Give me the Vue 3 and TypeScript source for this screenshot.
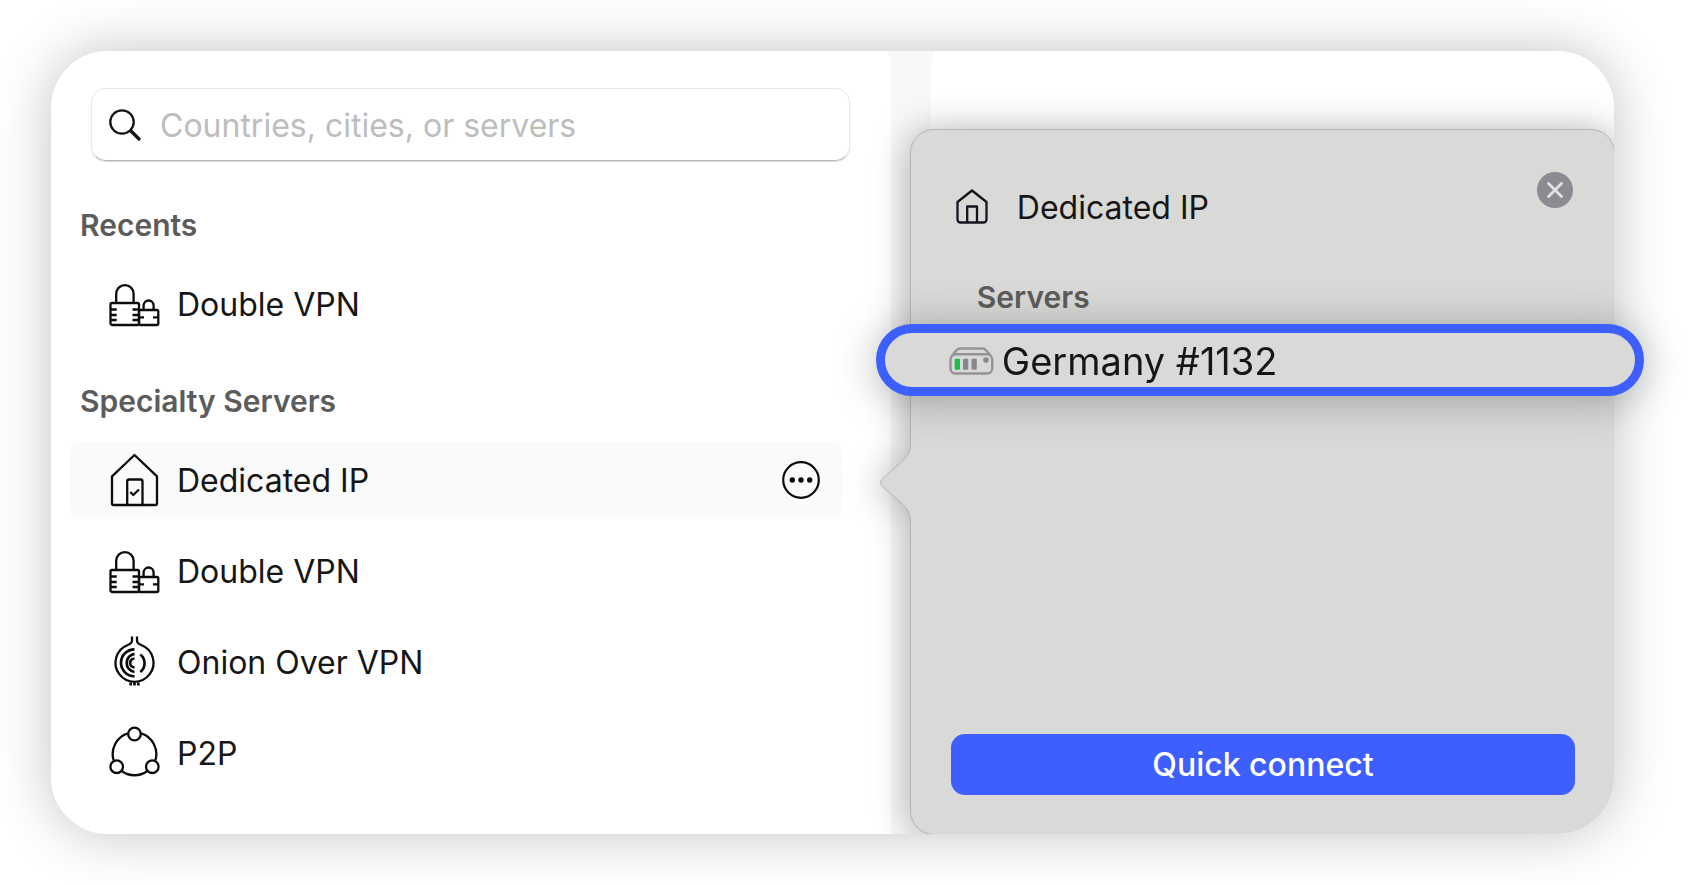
<script setup lang="ts">
import { ref } from 'vue'

type IconName = 'locks' | 'house' | 'onion' | 'p2p'

interface ServerItem {
  id: string
  label: string
  icon: IconName
}

interface ServerGroup {
  title: string
  items: ServerItem[]
}

const groups: ServerGroup[] = [
  {
    title: 'Recents',
    items: [{ id: 'recent-double', label: 'Double VPN', icon: 'locks' }],
  },
  {
    title: 'Specialty Servers',
    items: [
      { id: 'dedicated', label: 'Dedicated IP', icon: 'house' },
      { id: 'double', label: 'Double VPN', icon: 'locks' },
      { id: 'onion', label: 'Onion Over VPN', icon: 'onion' },
      { id: 'p2p', label: 'P2P', icon: 'p2p' },
    ],
  },
]

const query = ref('')
const selected = ref('dedicated')
</script>

<template>
  <main class="stage">
    <div class="window">
      <section class="sidebar">
        <label class="search">
          <svg class="search-icon" viewBox="0 0 32 32" aria-hidden="true">
            <circle cx="13" cy="13" r="11.7" />
            <path class="handle" d="M22 22L30 30" />
          </svg>
          <input v-model="query" type="text" placeholder="Countries, cities, or servers" aria-label="Search servers" />
        </label>

        <div v-for="group in groups" :key="group.title" class="group">
          <h2>{{ group.title }}</h2>
          <ul>
            <li v-for="item in group.items" :key="item.id" class="row" :class="{ active: item.id === selected }">
              <button type="button" class="pick" @click="selected = item.id">
                <svg v-if="item.icon === 'locks'" class="icon" viewBox="0 0 51 51" aria-hidden="true">
                  <rect x="2.5" y="25" width="28.5" height="22" rx="1.5" />
                  <path d="M8.2 25V15.8a8.7 8.7 0 0 1 17.4 0V25" />
                  <rect x="31" y="32" width="19.3" height="15" rx="1.5" />
                  <path d="M35.6 32V27.5a5 5 0 0 1 10 0V32" />
                  <path d="M3 31.5H8.7M3 37H8.7M3 42H8.700M24.500 31.500H31M24.500 37H31M24.500 42H31M31 39.300H36M45 39.300H50" />
                </svg>
                <svg v-else-if="item.icon === 'house'" class="icon" viewBox="0 0 51 51" aria-hidden="true">
                  <path d="M26.5 1L49 22.3V49.5a1.5 1.5 0 0 1-1.5 1.5H5.5a1.5 1.5 0 0 1-1.5-1.500V22.300Z" />
                  <path d="M19.2 51V27.5a2 2 0 0 1 2-2H32.5a2 2 0 0 1 2 2V51" />
                  <path d="M22.3 38L25.3 41L31 35.5" />
                </svg>
                <svg v-else-if="item.icon === 'onion'" class="icon" viewBox="0 0 51 51" aria-hidden="true">
                  <path d="M24 .5V4.5C24 7.3 22.5 8 19.8 9A19 19 0 1 0 33.2 9C30.5 8 29 7.3 29 4.5V.5" />
                  <path class="bold" d="M26.500 13.300a13.500 13.500 0 0 0 0 27M26.500 17.800a9.200 9.200 0 0 0 0 18.200M26.500 22.500a4.400 4.400 0 0 0 0 8.800M32.300 18.500C38 23 38 31.500 32.300 36" />
                  <path class="bold" d="M22.700 46.500V49.500M26.500 46.500V49.500M30.300 46.500V49.500" />
                </svg>
                <svg v-else class="icon" viewBox="0 0 51 51" aria-hidden="true">
                  <circle cx="26.5" cy="7" r="6.3" />
                  <circle cx="8.7" cy="39.7" r="6.3" />
                  <circle cx="44.3" cy="39.7" r="6.3" />
                  <path d="M19.8 6.4A21.700 21.700 0 0 0 5.600 33.300M33.200 6.400A21.700 21.700 0 0 1 47.400 33.300M13.900 44.200A21.700 21.700 0 0 0 39.100 44.200" />
                </svg>
                <span>{{ item.label }}</span>
              </button>
              <button v-if="item.id === selected" type="button" class="more" aria-label="More options">
                <svg viewBox="0 0 38 38" aria-hidden="true">
                  <circle class="ring" cx="19" cy="19" r="17.8" />
                  <circle cx="10.3" cy="19" r="2.7" />
                  <circle cx="19" cy="19" r="2.7" />
                  <circle cx="27.7" cy="19" r="2.7" />
                </svg>
              </button>
            </li>
          </ul>
        </div>
      </section>

      <div class="detail"></div>

      <section class="popover" aria-label="Dedicated IP">
        <svg class="arrow" viewBox="0 0 33 78" aria-hidden="true">
          <path class="fill" d="M32 0C32 9 28 13 23 17.5L3.5 34.5Q-.5 38.5 3.5 42.5L23 59.5C28 64 32 69 32 78H33V0Z" />
          <path class="line" d="M31.5 0C31.5 9 28 13 23 17.5L3.5 34.5Q-.5 38.5 3.5 42.5L23 59.5C28 64 31.5 69 31.5 78" />
        </svg>
        <header>
          <svg class="home" viewBox="0 0 32 35" aria-hidden="true">
            <path d="M16 1.5L30.5 13V30.5a3 3 0 0 1-3 3H4.5a3 3 0 0 1-3-3V13Z" />
            <path d="M11.2 33.5V17.5H21V33.5" />
          </svg>
          <h1>Dedicated IP</h1>
          <button type="button" class="close" aria-label="Close">
            <svg viewBox="0 0 36 36" aria-hidden="true">
              <path d="M11.500 11.500L24.500 24.500M24.500 11.500L11.500 24.500" />
            </svg>
          </button>
        </header>
        <h2>Servers</h2>
        <button type="button" class="connect">Quick connect</button>
      </section>
    </div>

    <button type="button" class="callout">
      <svg viewBox="0 -2 45 30" aria-hidden="true">
        <path class="case" d="M1.500 12.500Q1.500 10.500 3 8.800L7.500 3.300Q9 1.500 11.500 1.500H33Q35.500 1.500 37 3.300L41.700 8.800Q43.200 10.500 43.200 12.500V21.500a5 5 0 0 1-5 5H6.500a5 5 0 0 1-5-5ZM3.500 8.500Q5 7.300 7 7.300H38Q40 7.300 41.500 8.500" />
        <rect class="on" x="5.7" y="11.7" width="5.3" height="11" rx="1" />
        <rect class="off" x="14" y="11.7" width="5.3" height="11" rx="1" />
        <rect class="off" x="22.5" y="11.7" width="5.3" height="11" rx="1" />
        <circle class="off" cx="37" cy="13" r="2.8" />
      </svg>
      <span>Germany #1132</span>
    </button>
  </main>
</template>

<style>
body {
  margin: 0;
  background: #fff;
}
</style>

<style scoped>
.stage {
  --split: 54.95%;
  --blue: #3e5fff;
  position: relative;
  margin: 51px 81px 51px 51px;
  font-family: Inter, "Liberation Sans", sans-serif;
  color: #161616;
}

button {
  padding: 0;
  border: 0;
  background: none;
  font: inherit;
  color: inherit;
  cursor: pointer;
}

h1,
h2,
ul {
  margin: 0;
  padding: 0;
}

svg {
  display: block;
  flex: none;
  overflow: visible;
}

.window {
  position: relative;
  display: grid;
  grid-template-columns: 840fr 683fr;
  column-gap: 40px;
  overflow: hidden;
  border-radius: 57px;
  background: #f8f8f8;
  box-shadow: 0 0 56px rgba(0, 0, 0, 0.24);
}

.sidebar {
  padding: 37px 48px 44px 18px;
  border-top-right-radius: 5px 15px;
  background: #fff;
}

.detail {
  border-top-left-radius: 5px 15px;
  background: #fff;
}

.search {
  display: flex;
  align-items: center;
  gap: 19px;
  height: 71px;
  margin: 0 -7px 0 22px;
  padding-left: 17px;
  border: 1px solid #e8e8e8;
  border-bottom-color: #b8b8b8;
  border-radius: 15px;
  box-shadow: 0 1px 1px rgba(0, 0, 0, 0.16);
}

.search-icon {
  width: 32px;
  height: 32px;
  fill: none;
  stroke: #161616;
  stroke-width: 2.3;
  stroke-linecap: round;
}

.search-icon .handle {
  stroke-width: 3.4;
}

.search input {
  flex: 1;
  min-width: 0;
  padding: 2px 0 0;
  border: 0;
  outline: 0;
  background: none;
  font: 400 32px/40px Inter, "Liberation Sans", sans-serif;
  color: #161616;
}

.search input::placeholder {
  color: #bdbdbd;
  opacity: 1;
}

h2 {
  font-size: 30px;
  font-weight: 600;
  line-height: 40px;
  color: #5c5c5c;
}

.group {
  margin-top: 40px;
}

.search + .group {
  margin-top: 44px;
}

.group h2 {
  margin: 0 0 21px 11px;
}

ul {
  display: grid;
  gap: 16px;
  list-style: none;
}

.row {
  display: flex;
  align-items: center;
  height: 75px;
  padding-right: 23px;
  border-radius: 11px;
}

.row.active {
  background: #fafafa;
}

.pick {
  display: flex;
  flex: 1;
  align-items: center;
  gap: 18px;
  height: 100%;
  padding-left: 39px;
  font-size: 32px;
  line-height: 40px;
  text-align: left;
}

.pick span {
  padding-top: 2px;
}

.icon {
  width: 51px;
  height: 51px;
  fill: none;
  stroke: #0c0c0c;
  stroke-width: 2.3;
  stroke-linejoin: round;
}

.icon .bold {
  stroke-width: 2.7;
}

.more svg {
  width: 38px;
  height: 38px;
  fill: #0c0c0c;
}

.more .ring {
  fill: none;
  stroke: #0c0c0c;
  stroke-width: 2.2;
}

.popover {
  position: absolute;
  inset: 78px -1px -1px var(--split);
  display: flex;
  flex-direction: column;
  box-sizing: border-box;
  padding: 42px 39px 39px 40px;
  border: 1px solid #b4b4b3;
  border-radius: 24px;
  background: #d9d9d7;
  filter: drop-shadow(0 2px 18px rgba(0, 0, 0, 0.32));
}

.arrow {
  position: absolute;
  top: 314px;
  left: -32px;
  width: 33px;
  height: 78px;
}

.arrow .fill {
  fill: #d9d9d7;
}

.arrow .line {
  fill: none;
  stroke: #b4b4b3;
}

header {
  display: flex;
  align-items: flex-start;
}

.home {
  width: 32px;
  height: 35px;
  margin: 17px 29px 0 5px;
  fill: none;
  stroke: #14141f;
  stroke-width: 2.3;
  stroke-linejoin: round;
}

h1 {
  flex: 1;
  margin-top: 16px;
  font-size: 32px;
  font-weight: 400;
  line-height: 40px;
}

.close {
  margin-right: 2px;
  border-radius: 50%;
  background: #8b8b91;
}

.close svg {
  width: 36px;
  height: 36px;
  fill: none;
  stroke: #e4e4e4;
  stroke-width: 2.8;
  stroke-linecap: round;
}

.popover h2 {
  margin: 49px 0 0 26px;
}

.connect {
  height: 61px;
  margin-top: auto;
  border-radius: 14px;
  background: var(--blue);
  color: #fff;
  font-size: 32px;
  font-weight: 500;
}

.callout {
  position: absolute;
  top: 273px;
  right: -30px;
  left: calc(var(--split) - 34px);
  display: flex;
  align-items: center;
  gap: 8px;
  height: 72px;
  padding-left: 64px;
  border: 9px solid var(--blue);
  border-radius: 36px;
  background: #d9d9d7;
  box-shadow: 0 4px 44px rgba(0, 0, 0, 0.28);
  font-size: 38px;
  line-height: 48px;
}

.callout span {
  padding-top: 2px;
}

.callout svg {
  width: 45px;
  height: 30px;
}

.case {
  fill: none;
  stroke: #93939a;
  stroke-width: 2.4;
  stroke-linejoin: round;
}

.on {
  fill: #14c24a;
}

.off {
  fill: #86868d;
}
</style>
